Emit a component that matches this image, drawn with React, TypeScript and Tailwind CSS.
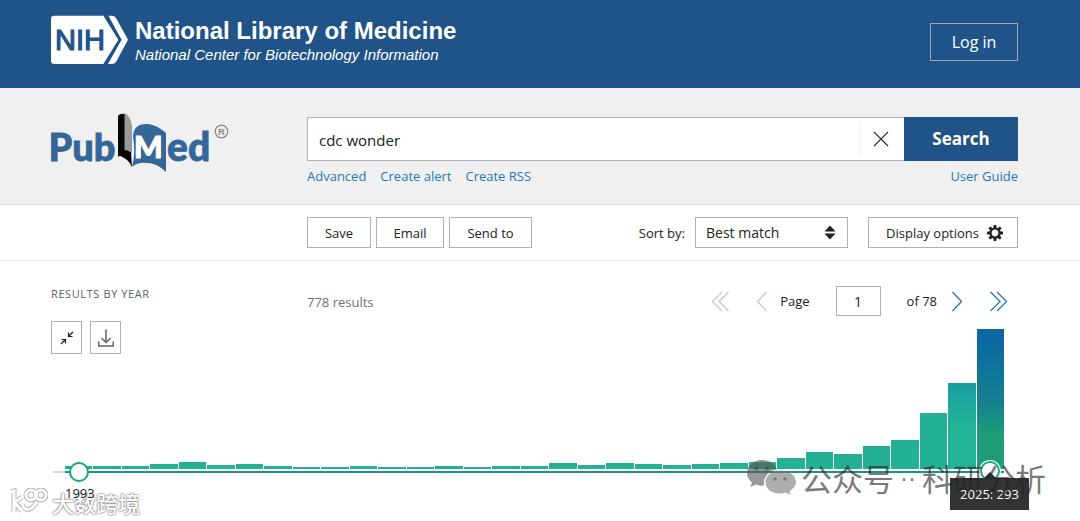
import React from "react";

const years: { year: number; height: number }[] = [
  3, 3, 3, 5, 7, 4, 5, 3, 2, 2, 3, 2, 2, 3, 2, 3, 3, 6, 4, 6, 5, 4, 5, 6, 7, 11, 17, 15, 23, 29, 56, 86, 140,
].map((height, i) => ({ year: 1993 + i, height }));

function NihLogo() {
  return (
    <svg width="77" height="50" viewBox="0 0 77 50" role="img" aria-label="NIH">
      <path d="M3 0.8H53L67.5 24.8L53 49H3Q0 49 0 46V3.800Q0 0.800 3 0.800Z" fill="#fff" />
      <path d="M57.500 0.800H61Q63.500 0.800 65 3L77 24.800L65 47Q63.500 49 61 49H57L70.500 24.800Z" fill="#fff" />
      <path d="M53.500 0L69 24.800L53.500 49.500" fill="none" stroke="#205489" strokeWidth="2.500" />
      <text x="4" y="35" fontFamily="Liberation Sans, Arial, sans-serif" fontSize="29" fill="#205489" stroke="#205489" strokeWidth="1.200">
        NIH
      </text>
    </svg>
  );
}

function PubMedLogo() {
  return (
    <svg className="-ml-1" width="184" height="62" viewBox="-4 0 184 62" role="img" aria-label="PubMed">
      <g fontFamily="Lato, sans-serif" fontWeight="900" fontSize="38" fill="#336699" stroke="#336699" strokeWidth="0.800">
        <text x="-2.500" y="48.500">Pub</text>
        <text x="116" y="48.500" fontSize="39">ed</text>
      </g>
      <path d="M67 4Q69 1 73 2V41L67 45Z" fill="#111" />
      <path d="M67 4V43Q78 47 81 55L80 40L74 37V2Z" fill="#050505" />
      <path d="M73.500 1Q80 4 81 15V42Q79 38 73.500 38Z" fill="#999" />
      <path d="M82 24Q83 11 97 12Q106 13 115 21V60Q106 51 96 51Q87 50 81 55Q85 42 82 24Z" fill="#336699" />
      <text x="83" y="46" fontFamily="Lato, sans-serif" fontWeight="900" fontSize="30" fill="#fff" stroke="#fff" strokeWidth="1">M</text>
      <circle cx="170.500" cy="19.500" r="6.300" fill="none" stroke="#888" strokeWidth="1.200" />
      <text x="170.500" y="23" textAnchor="middle" fontFamily="Liberation Sans, sans-serif" fontWeight="700" fontSize="9.500" fill="#888">R</text>
    </svg>
  );
}

function Chevron({ double = false, left = false }: { double?: boolean; left?: boolean }) {
  const d = left
    ? double ? "M11 1L1.500 10.500L11 20M17.500 1L8 10.500L17.500 20" : "M10.500 1L1.500 10.500L10.500 20"
    : double ? "M1.500 1L11 10.500L1.500 20M8 1L17.500 10.500L8 20" : "M1.500 1L10.500 10.500L1.500 20";
  return (
    <svg width={double ? 19 : 12} height="21" fill="none" stroke="currentColor" strokeWidth="1.300" aria-hidden="true">
      <path d={d} />
    </svg>
  );
}

function Gear() {
  return (
    <svg width="16" height="16" viewBox="-8 -8 16 16" aria-hidden="true">
      <circle r="4.500" fill="none" stroke="#212121" strokeWidth="2.200" />
      {[0, 45, 90, 135, 180, 225, 270, 315].map((a) => (
        <path key={a} d="M-1.700 -5L-1.200 -8H1.200L1.700 -5Z" transform={`rotate(${a})`} fill="#212121" />
      ))}
    </svg>
  );
}

function WeChat() {
  return (
    <svg width="50" height="36" viewBox="0 0 50 36" aria-hidden="true">
      <path d="M15 0C6 0 0 6 0 13C0 17 2 20 5 22.500L3.500 27L9 24.500Q12 26 17 25.500C16 17 22 10 30 9.500C28 4 22 0 15 0Z" fill="#555" />
      <path d="M33 10.500C24.500 10.500 18.500 16 18.500 22C18.500 29 25 33.500 33 33.500Q36 33.500 38.500 32.500L43.500 35L42.500 31C46 29 49 26 49 22C49 15.500 42 10.500 33 10.500Z" fill="#777" />
      <circle cx="9.500" cy="9" r="2" fill="#222" />
      <circle cx="20" cy="9" r="2" fill="#222" />
      <circle cx="28" cy="19" r="1.800" fill="#222" />
      <circle cx="38" cy="19" r="1.800" fill="#222" />
    </svg>
  );
}

const outlined = "border border-[#aeb0b5] bg-white text-[#212121]";

export default function App() {
  return (
    <div className="relative w-full overflow-hidden bg-white font-['Open_Sans','Noto_Sans',sans-serif] text-[13px] leading-5 text-[#212121]">
      <header className="flex h-22 items-start justify-between bg-[#205489] pr-[62px] pl-[51px] text-white">
        <a href="#home" className="flex gap-[7px] pt-[15px] font-['Liberation_Sans',Arial,sans-serif]">
          <NihLogo />
          <span className="flex flex-col pt-1">
            <span className="text-[24px] leading-6 font-bold">National Library of Medicine</span>
            <span className="text-[15px] leading-6 italic">National Center for Biotechnology Information</span>
          </span>
        </a>
        <button className="mt-[23px] h-[38px] w-22 border border-[#8fa9c4] text-[16px]">Log in</button>
      </header>

      <section className="flex h-[117px] border-b border-[#dcdee0] bg-[#f0f0f0] pr-[62px] pl-[51px]">
        <a href="#pubmed" className="w-64 shrink-0 pt-6">
          <PubMedLogo />
        </a>
        <div className="flex-1 pt-[29px]">
          <form className="flex h-11" onSubmit={(e) => e.preventDefault()}>
            <div className="flex flex-1 border border-r-0 border-[#aeb0b5] bg-white">
              <input aria-label="Search term" defaultValue="cdc wonder" className="min-w-0 flex-1 px-[11px] pt-0.5 text-[15px] outline-none" />
              <button type="button" aria-label="Clear search" className="my-1 flex w-11 items-center justify-center border-l border-[#f1f1f1] pr-1">
                <svg width="16" height="16" stroke="#333" strokeWidth="1.200" aria-hidden="true"><path d="M1 1L15 15M15 1L1 15" /></svg>
              </button>
            </div>
            <button className="w-[114px] bg-[#205489] text-[17px] font-bold text-white">Search</button>
          </form>
          <nav className="flex gap-[14px] pt-[5px] text-[#2378b5]">
            <a href="#advanced">Advanced</a>
            <a href="#alert">Create alert</a>
            <a href="#rss">Create RSS</a>
            <a href="#guide" className="ml-auto">User Guide</a>
          </nav>
        </div>
      </section>

      <section className="flex h-14 items-center border-b border-[#e4e4e4] pr-[62px] pl-[307px]">
        <div className="flex gap-[5px]">
          <button className={`${outlined} h-[31px] w-16`}>Save</button>
          <button className={`${outlined} h-[31px] w-17`}>Email</button>
          <button className={`${outlined} h-[31px] w-[83px]`}>Send to</button>
        </div>
        <label htmlFor="sort" className="mr-2.5 ml-auto">Sort by:</label>
        <div className="relative">
          <select id="sort" className={`${outlined} h-[31px] w-[153px] appearance-none px-2.5 text-[14px]`}>
            <option>Best match</option>
          </select>
          <svg className="pointer-events-none absolute top-2 right-3" width="12" height="15" fill="#212121" aria-hidden="true">
            <path d="M6 0.500L11.500 6.500H0.500ZM6 14.500L11.500 8.500H0.500Z" />
          </svg>
        </div>
        <button className={`${outlined} ml-5 flex h-[31px] w-[150px] items-center justify-end gap-2 pr-3.5`}>
          Display options <Gear />
        </button>
      </section>

      <main>
        <div className="flex h-16 pr-[62px] pl-[51px]">
          <h2 className="w-64 shrink-0 pt-[23px] text-[11px] tracking-[0.6px] text-[#5b616b]">RESULTS BY YEAR</h2>
          <p className="pt-[31px] text-[#6b7079]">778 results</p>
          <div className="ml-auto box-content flex h-[30px] items-center pt-[25px] pr-2.5">
            <button aria-label="First page" disabled className="mr-[26px] text-[#c6c8ca]"><Chevron double left /></button>
            <button aria-label="Previous page" disabled className="mr-3 text-[#c6c8ca]"><Chevron left /></button>
            <label htmlFor="page">Page</label>
            <input id="page" defaultValue="1" className={`${outlined} mr-[26px] ml-[26px] h-[30px] w-[45px] text-center text-[14px]`} />
            <span>of 78</span>
            <button aria-label="Next page" className="ml-[14px] text-[#2378b5]"><Chevron /></button>
            <button aria-label="Last page" className="ml-[26px] text-[#2378b5]"><Chevron double /></button>
          </div>
        </div>

        <div className="relative h-[196px]">
          <div className="absolute top-[-4px] left-[51px] flex gap-2">
            <button aria-label="Collapse chart" className={`${outlined} flex h-[33px] w-[31px] items-center justify-center`}>
              <svg width="14" height="14" viewBox="0 0 14 14" stroke="#212121" strokeWidth="1.200" fill="none" aria-hidden="true">
                <path d="M13 1L9 5M8.500 1.500V5.500H12.500M1 13L5 9M1.500 8.500H5.500V12.500" />
              </svg>
            </button>
            <button aria-label="Download data" className={`${outlined} flex h-[33px] w-[31px] items-center justify-center`}>
              <svg width="16" height="18" viewBox="0 0 16 18" stroke="#666" strokeWidth="1.500" fill="none" aria-hidden="true">
                <path d="M8 0.500V13M3.500 9L8 13.500L12.500 9M0.800 12.500V17H15.200V12.500" />
              </svg>
            </button>
          </div>

          <div className="flex h-[148px] items-end pr-[76px] pl-[53px]">
            <div className="h-[2px] w-3 bg-[#d6d7d9]" />
            <div className="flex flex-1 flex-col gap-px">
              <div className="flex h-[141px] items-end gap-px pb-px">
                {years.map(({ year, height }) => (
                  <div
                    key={year}
                    title={String(year)}
                    className={
                      year === 2025
                        ? "flex-1 bg-linear-to-b from-[#0d64a5] via-[#157f91] to-[#1e9c77] to-75%"
                        : year === 2024
                          ? "flex-1 bg-linear-to-b from-[#1b9da3] to-[#22b495] to-50%"
                          : "flex-1 bg-[#24b193]"
                    }
                    style={{ height }}
                  />
                ))}
              </div>
              <div className="h-[2px] bg-[#20947e]" />
            </div>
          </div>

          <button aria-label="First year" className="absolute top-[137px] left-[69px] size-5 rounded-full border-2 border-[#20a383] bg-white" />
          <button aria-label="Last year" className="absolute top-[136px] right-[80px] size-5 rounded-full border-2 border-[#20a383] bg-white ring-1 ring-white" />
          <div className="absolute top-[153px] right-[51px] flex h-8 w-[79px] items-center justify-center bg-[#333] text-[13px] text-white">
            2025: 293
            <svg className="absolute -top-1.5" width="12" height="6" fill="#333" aria-hidden="true"><path d="M6 0L12 6H0Z" /></svg>
          </div>

          <div className="pointer-events-none absolute top-[135px] right-[34px] flex gap-1 text-[#222] opacity-60">
            <WeChat />
            <span className="flex font-['Noto_Sans_CJK_SC',sans-serif] text-[31px] leading-9 whitespace-nowrap">
              公众号<span className="w-7 text-center font-['Liberation_Sans',sans-serif] text-[24px]">··</span>科研分析
            </span>
          </div>
          <div className="pointer-events-none absolute top-[163px] left-[9px] flex gap-1 text-white">
            <svg width="39" height="26" fill="none" aria-hidden="true">
              {["#b5b5b5", "#fff"].map((color, i) => (
                <g key={color} stroke={color} strokeWidth={i ? 3 : 5}>
                  <path d="M2 4L5 3V24M5 15L13 9M6 15L13 23M13 16Q15 24 23 20L28 14" />
                  <circle cx="22" cy="7" r="5" />
                  <circle cx="32" cy="7" r="5" />
                </g>
              ))}
            </svg>
            <span className="font-['Noto_Sans_CJK_SC',sans-serif] text-[22px] leading-7 font-medium whitespace-nowrap [text-shadow:0_0_2px_#777,0_0_2px_#777]">大数跨境</span>
          </div>
          <span className="absolute top-[158px] left-[65px]">1993</span>
        </div>
      </main>
    </div>
  );
}
